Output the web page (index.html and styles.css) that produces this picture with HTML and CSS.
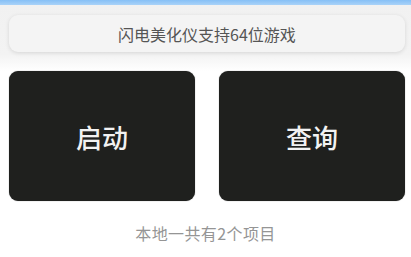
FILE: index.html
```html
<!DOCTYPE html>
<html lang="zh-CN">
<head>
    <meta charset="UTF-8">
    <meta name="viewport" content="width=device-width, initial-scale=1.0">
    <title>闪电美化仪</title>
    <link rel="stylesheet" href="styles.css">
</head>
<body>
    <div class="top-bar"></div>

    <div class="header">
        <div class="notice">闪电美化仪支持64位游戏</div>
    </div>

    <div class="actions">
        <button class="action-button">启动</button>
        <button class="action-button">查询</button>
    </div>

    <p class="summary">本地一共有2个项目</p>
    <div class="list-start"></div>
</body>
</html>
```

FILE: styles.css
```css
* {
    box-sizing: border-box;
    margin: 0;
    padding: 0;
}

body {
    font-family: "Noto Sans CJK SC", "Noto Sans", sans-serif;
    background: #ffffff;
    width: 411px;
    height: 257px;
    overflow: hidden;
}

.top-bar {
    height: 5px;
    background: linear-gradient(180deg, #86c0f6 0%, #a9d2f8 100%);
}

.header {
    background: linear-gradient(180deg, #f1f1f1 0%, #f3f3f3 75%, #ffffff 100%);
    padding: 10px 6px 12px 9px;
    height: 66px;
}

.notice {
    height: 37px;
    background: #f4f4f4;
    border-radius: 9px;
    box-shadow: 0 1px 4px rgba(0, 0, 0, 0.12);
    display: flex;
    align-items: center;
    justify-content: center;
    font-size: 16px;
    color: #555555;
}

.actions {
    display: flex;
    gap: 24px;
    padding: 0 6px 0 9px;
}

.action-button {
    flex: 1;
    height: 130px;
    border: none;
    border-radius: 9px;
    background: #1f201e;
    box-shadow: 0 0 1px rgba(0, 0, 0, 0.5);
    color: #f2f2f2;
    font-family: inherit;
    font-size: 26px;
    font-weight: 500;
    padding-top: 1px;
}

.summary {
    text-align: center;
    font-size: 16px;
    letter-spacing: 0.4px;
    color: #959595;
    margin-top: 20px;
}

.list-start {
    margin-top: 13px;
    height: 8px;
    background: linear-gradient(180deg, #fafafa 0%, #f6f6f6 100%);
}
```
